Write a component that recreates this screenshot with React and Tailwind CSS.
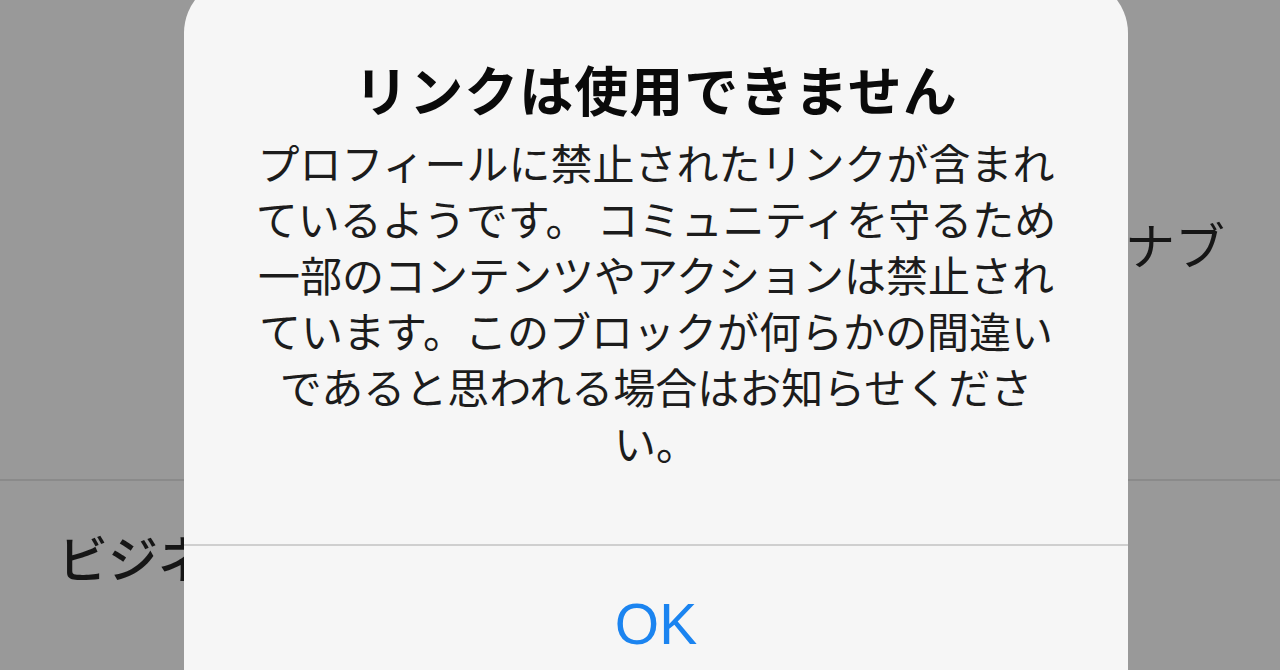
import React from "react";

const jp = { fontFamily: '"Noto Sans CJK JP", "Noto Sans", sans-serif' };

export default function App() {
  return (
    <div className="relative w-[1280px] h-[670px] overflow-hidden bg-[#999999]" style={jp}>
      {/* underlying page */}
      <div className="flex flex-col">
        <div className="h-[481px] flex items-center justify-end pr-[55px] pt-[6px] border-b-2 border-[#8a8a8a]">
          <span className="text-[50px] leading-[60px] text-[#161616]">アナブ</span>
        </div>
        <div className="h-[150px] flex items-center pl-[58px]">
          <span className="text-[50px] leading-[60px] text-[#161616] font-medium">ビジネスツール</span>
        </div>
      </div>

      {/* alert dialog */}
      <div className="absolute left-[184px] top-[-22px] w-[944px] h-[760px] rounded-[55px] bg-[#f6f6f6] flex flex-col">
        <div className="pt-[79px] flex flex-col items-center">
          <h1 className="text-[54px] leading-[64px] font-bold text-[#0a0a0a] tracking-[1px]">
            リンクは使用できません
          </h1>
          <p className="mt-[13px] text-[42px] leading-[56px] text-[#1c1c1c] text-center">
            プロフィールに禁止されたリンクが含まれ
            <br />
            ているようです。 コミュニティを守るため
            <br />
            一部のコンテンツやアクションは禁止され
            <br />
            ています。このブロックが何らかの間違い
            <br />
            であると思われる場合はお知らせくださ
            <br />
            い。
          </p>
        </div>
        <div className="mt-[74px] border-t-2 border-[#cfcfcf] flex justify-center pt-[46px]">
          <span
            className="text-[57px] leading-[64px] text-[#1b84f0]"
            style={{ fontFamily: '"Liberation Sans", Arial, sans-serif' }}
          >
            OK
          </span>
        </div>
      </div>
    </div>
  );
}
